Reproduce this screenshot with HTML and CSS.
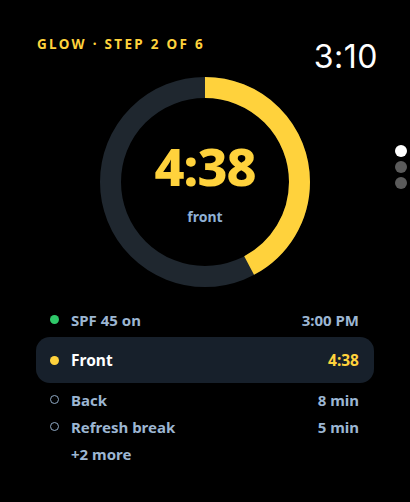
FILE: index.html
```html
<!DOCTYPE html>
<html>
<head>
<meta charset="utf-8">
<link rel="stylesheet" href="styles.css">
</head>
<body>
<div class="screen">
  <header class="top">
    <div class="title">GLOW · STEP 2 OF 6</div>
    <div class="clock">3:10</div>
  </header>
  <div class="ring-wrap">
    <svg class="ring" width="210" height="210" viewBox="0 0 210 210">
      <circle cx="105" cy="105" r="94.5" fill="none" stroke="#1f272f" stroke-width="21"/>
      <circle cx="105" cy="105" r="94.5" fill="none" stroke="#ffd23c" stroke-width="21"
        stroke-dasharray="250.5 1000" transform="rotate(-90 105 105)"/>
    </svg>
    <div class="ring-center">
      <div class="big">4:38</div>
      <div class="sub">front</div>
    </div>
  </div>
  <ul class="steps">
    <li class="step"><span class="dot done"></span><span class="name">SPF 45 on</span><span class="val">3:00 PM</span></li>
    <li class="step active"><span class="dot cur"></span><span class="name">Front</span><span class="val">4:38</span></li>
    <li class="step"><span class="dot todo"></span><span class="name">Back</span><span class="val">8 min</span></li>
    <li class="step"><span class="dot todo"></span><span class="name">Refresh break</span><span class="val">5 min</span></li>
    <li class="step more"><span class="name">+2 more</span></li>
  </ul>
  <div class="pager">
    <span class="pdot on"></span>
    <span class="pdot"></span>
    <span class="pdot"></span>
  </div>
</div>
</body>
</html>
```
FILE: styles.css
```css
html, body {
  margin: 0;
  padding: 0;
  background: #000;
}
.screen {
  position: relative;
  width: 410px;
  height: 502px;
  overflow: hidden;
  background: #000;
  font-family: "Noto Sans", "Inter", sans-serif;
}
.top {
  display: flex;
  justify-content: space-between;
  align-items: center;
  padding: 36px 32px 0 37px;
  height: 38px;
}
.title {
  color: #ffd23c;
  font-size: 13.5px;
  font-weight: 700;
  letter-spacing: 2.3px;
  margin-top: -22px;
}
.clock {
  color: #fff;
  font-family: "Inter", sans-serif;
  font-size: 32px;
  font-weight: 400;
  letter-spacing: 0.5px;
  margin-top: 2px;
}
.ring-wrap {
  position: relative;
  width: 210px;
  height: 210px;
  margin: 3px auto 0;
}
.ring {
  display: block;
}
.ring-center {
  position: absolute;
  inset: 0;
  display: flex;
  flex-direction: column;
  align-items: center;
  justify-content: center;
}
.big {
  color: #ffd23c;
  font-size: 52px;
  font-weight: 800;
  line-height: 1;
  letter-spacing: -1px;
  margin-top: 2px;
}
.sub {
  color: #8fb0d4;
  font-size: 14px;
  font-weight: 700;
  margin-top: 15px;
}
.steps {
  list-style: none;
  margin: 19px 36px 0 36px;
  padding: 0;
}
.step {
  display: flex;
  align-items: center;
  height: 27px;
  padding: 0 15px 0 14px;
  color: #9cb6d2;
  font-size: 15px;
  font-weight: 700;
}
.step .name {
  flex: 1;
}
.dot {
  width: 9px;
  height: 9px;
  border-radius: 50%;
  margin-right: 12px;
  box-sizing: border-box;
}
.dot.done { background: #2fc96a; }
.dot.cur { background: #ffd23c; }
.dot.todo { border: 1.8px solid #8fa9c4; }
.step.active {
  height: 46px;
  margin: 4px 0 3px;
  background: #17202b;
  border-radius: 14px;
  color: #fff;
  font-size: 15.5px;
}
.step.active .val {
  color: #ffd23c;
}
.step.more {
  padding-left: 35px;
}
.pager {
  position: absolute;
  right: 3px;
  top: 145px;
  display: flex;
  flex-direction: column;
  gap: 4px;
}
.pdot {
  width: 12px;
  height: 12px;
  border-radius: 50%;
  background: #5b5b5b;
}
.pdot.on {
  background: #fff;
}
```
